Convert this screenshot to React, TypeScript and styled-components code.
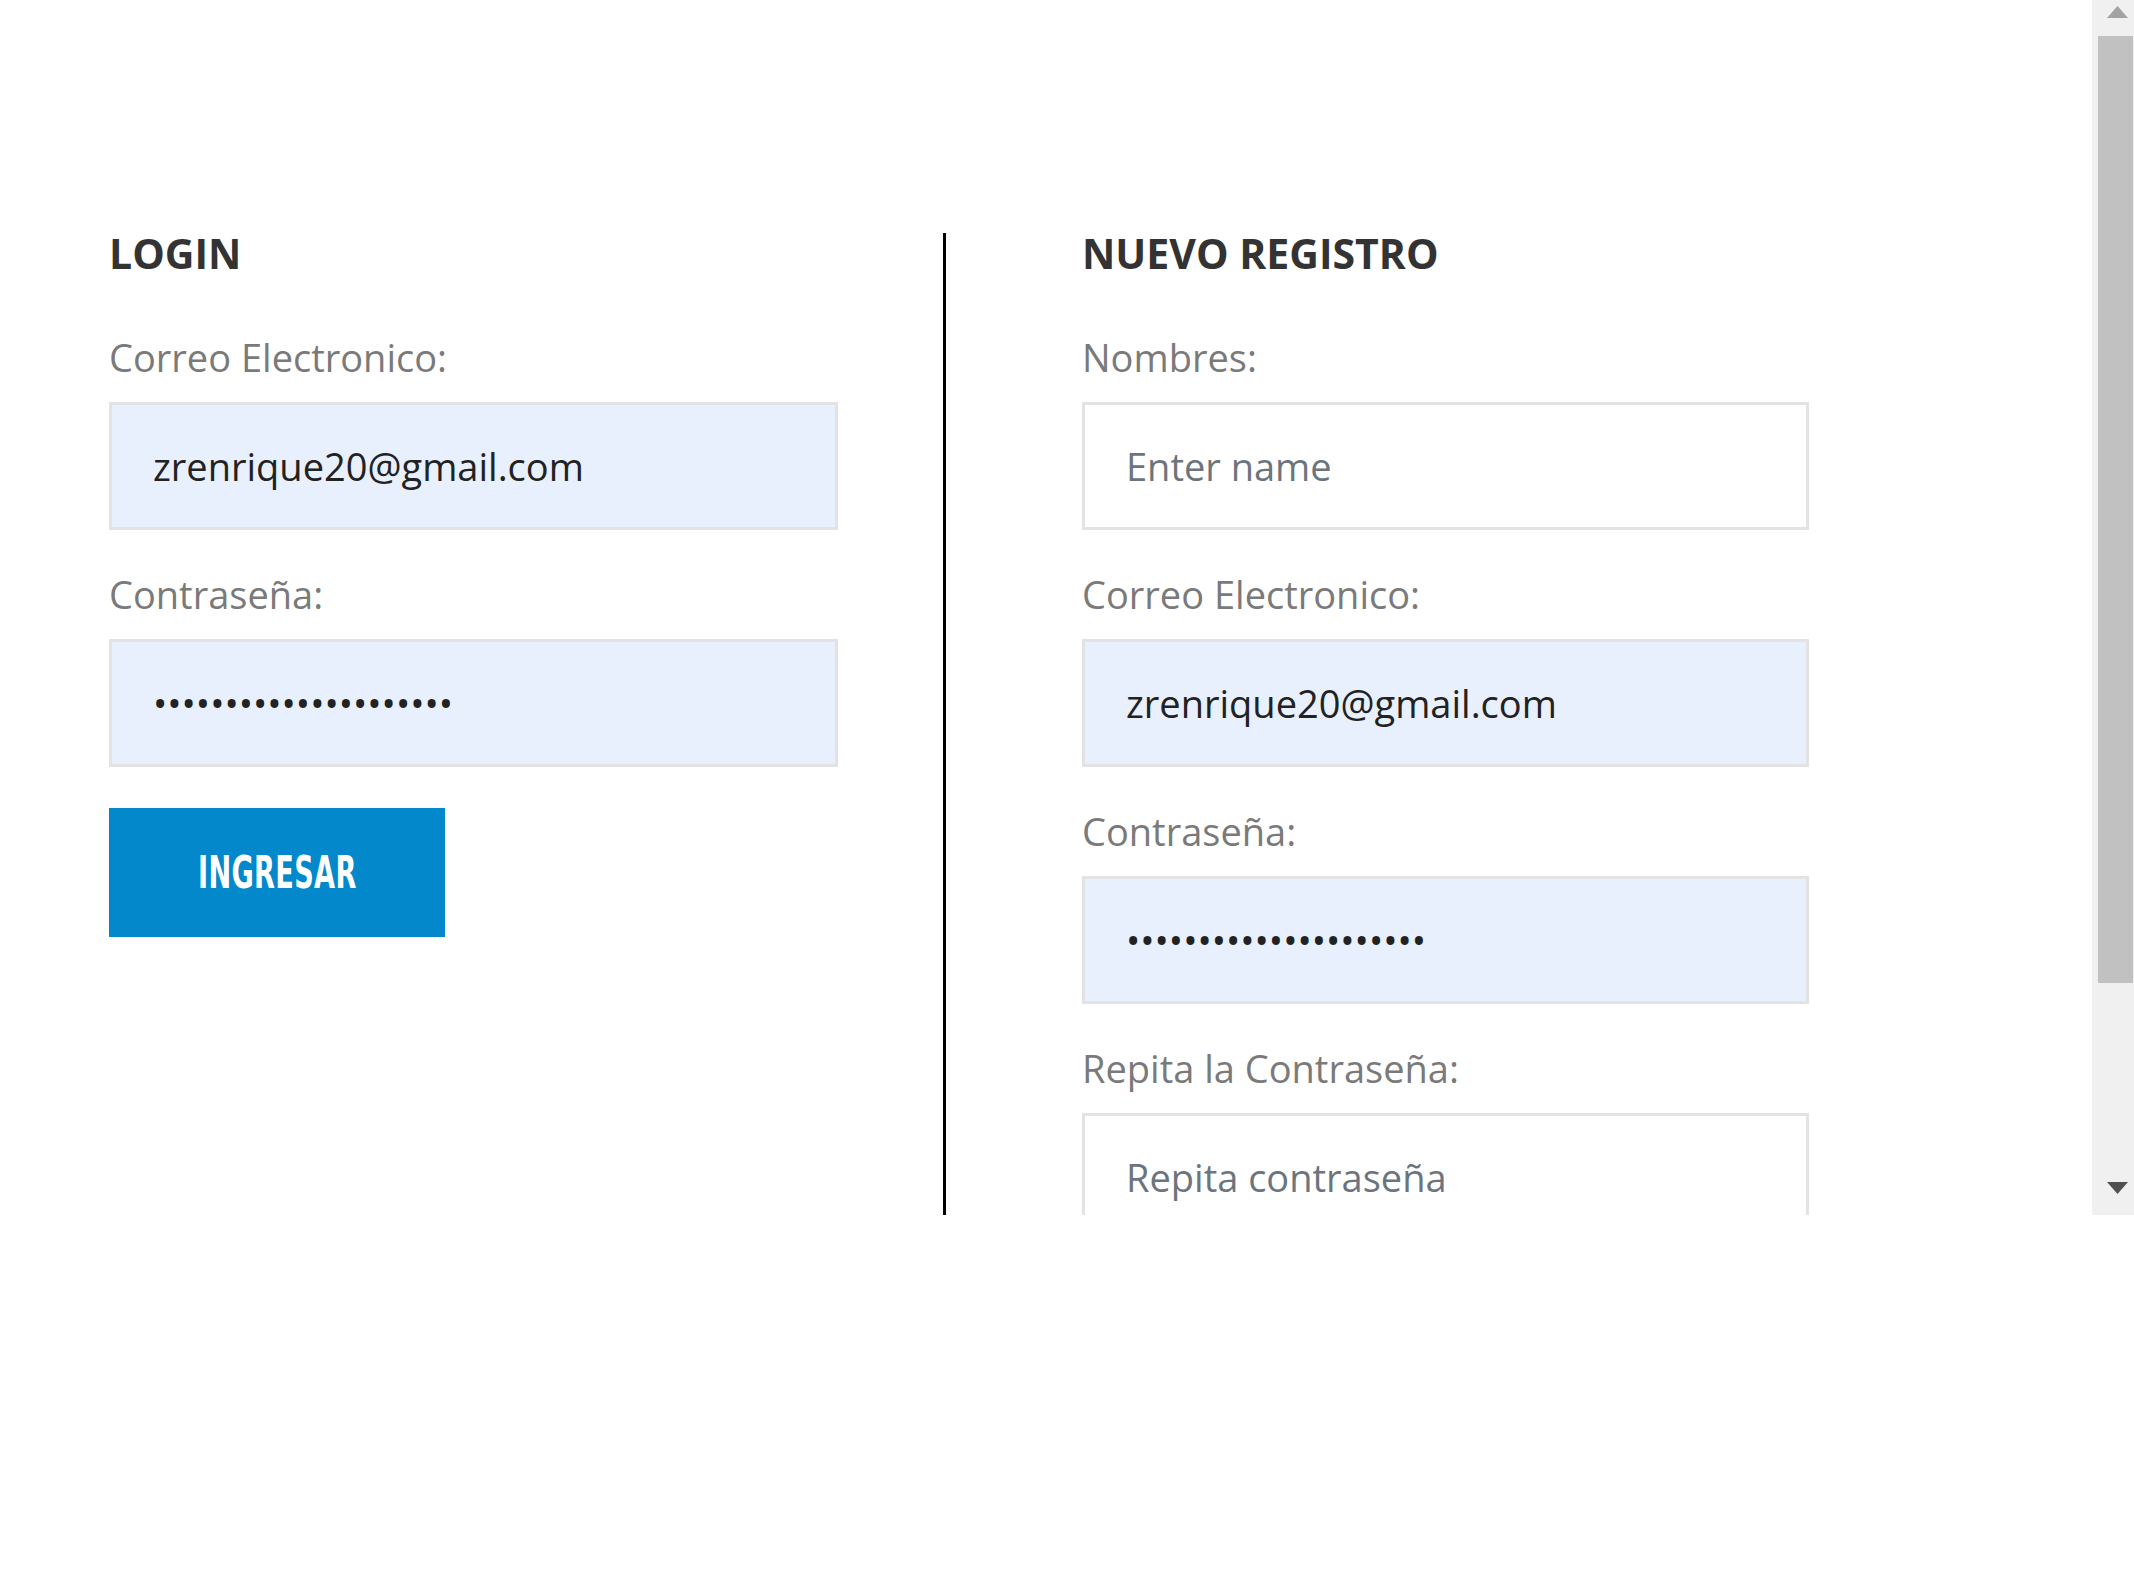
import React from "react";
import styled, { createGlobalStyle } from "styled-components";

const GlobalStyle = createGlobalStyle`
  html, body {
    margin: 0;
    padding: 0;
    background: #ffffff;
    font-family: "Open Sans", "Liberation Sans", sans-serif;
  }
  * { box-sizing: border-box; }
`;

const Frame = styled.div`
  display: flex;
  height: 1215px;
  width: 100%;
  overflow: hidden;
  background: #ffffff;
`;

const Viewport = styled.div`
  flex: 1;
  min-width: 0;
  overflow: hidden;
`;

const ScrollBar = styled.div`
  width: 42px;
  flex-shrink: 0;
  display: flex;
  flex-direction: column;
  background: #f0f0f0;
`;

const ArrowButton = styled.div<{ $down?: boolean }>`
  height: 36px;
  flex-shrink: 0;
  display: flex;
  align-items: flex-start;
  padding-left: 15px;
  padding-top: ${(p) => (p.$down ? "3px" : "6px")};
`;

const Track = styled.div`
  flex: 1;
  display: flex;
  flex-direction: column;
`;

const Thumb = styled.div`
  height: 947px;
  margin-left: 6px;
  margin-right: 1px;
  background: #c1c1c1;
`;

const Content = styled.div`
  display: flex;
  align-items: stretch;
  padding: 233px 0 56px 109px;
`;

const LoginColumn = styled.section`
  width: 729px;
  margin-right: 105px;
  flex-shrink: 0;
`;

const Divider = styled.div`
  width: 3px;
  background: #000000;
  flex-shrink: 0;
`;

const RegisterColumn = styled.section`
  width: 727px;
  margin-left: 136px;
  flex-shrink: 0;
`;

const Heading = styled.h2`
  margin: 0 0 60px;
  font-family: "Open Sans", "Liberation Sans", sans-serif;
  font-weight: 700;
  font-size: 41px;
  line-height: 41px;
  color: #333333;
  text-transform: uppercase;
`;

const Field = styled.div`
  display: flex;
  flex-direction: column;
  gap: 22px;
  margin-bottom: 41px;
`;

const Label = styled.label`
  font-family: "Open Sans", "Liberation Sans", sans-serif;
  font-weight: 400;
  font-size: 38px;
  line-height: 46px;
  color: #7a7a7a;
`;

const Input = styled.input<{ $filled?: boolean }>`
  display: block;
  width: 100%;
  height: 128px;
  margin: 0;
  padding: 0 41px;
  border: 3px solid #e3e3e3;
  border-radius: 0;
  background: ${(p) => (p.$filled ? "#e8f0fe" : "#ffffff")};
  font-family: "Open Sans", "Liberation Sans", sans-serif;
  font-size: 38px;
  color: #222222;
  outline: none;

  &::placeholder {
    color: #6c757d;
    opacity: 1;
  }
`;

const Button = styled.button`
  display: flex;
  align-items: center;
  justify-content: center;
  width: 336px;
  height: 129px;
  margin: 0;
  padding: 0;
  border: none;
  border-radius: 0;
  background: #0288cb;
  cursor: pointer;
`;

const ButtonText = styled.span`
  display: inline-block;
  font-family: "Liberation Sans Narrow", "DejaVu Sans", sans-serif;
  font-stretch: condensed;
  font-weight: 700;
  font-size: 45px;
  line-height: 1;
  color: #ffffff;
  letter-spacing: 0.5px;
  transform: scaleX(0.67);
`;

const EMAIL = "zrenrique20@gmail.com";
const PASS = "123456789012345678901";

export default function App() {
  return (
    <>
      <GlobalStyle />
      <Frame>
        <Viewport>
          <Content>
            <LoginColumn>
              <Heading>Login</Heading>
              <Field>
                <Label htmlFor="login-email">Correo Electronico:</Label>
                <Input id="login-email" type="email" $filled defaultValue={EMAIL} />
              </Field>
              <Field>
                <Label htmlFor="login-pass">Contraseña:</Label>
                <Input id="login-pass" type="password" $filled defaultValue={PASS} />
              </Field>
              <Button type="button">
                <ButtonText>INGRESAR</ButtonText>
              </Button>
            </LoginColumn>
            <Divider />
            <RegisterColumn>
              <Heading>Nuevo Registro</Heading>
              <Field>
                <Label htmlFor="reg-name">Nombres:</Label>
                <Input id="reg-name" type="text" placeholder="Enter name" />
              </Field>
              <Field>
                <Label htmlFor="reg-email">Correo Electronico:</Label>
                <Input id="reg-email" type="email" $filled defaultValue={EMAIL} />
              </Field>
              <Field>
                <Label htmlFor="reg-pass">Contraseña:</Label>
                <Input id="reg-pass" type="password" $filled defaultValue={PASS} />
              </Field>
              <Field>
                <Label htmlFor="reg-pass2">Repita la Contraseña:</Label>
                <Input id="reg-pass2" type="password" placeholder="Repita contraseña" />
              </Field>
              <Button type="button">
                <ButtonText>REGISTRAR</ButtonText>
              </Button>
            </RegisterColumn>
          </Content>
        </Viewport>
        <ScrollBar aria-hidden="true">
          <ArrowButton>
            <svg width="21" height="12" viewBox="0 0 21 12">
              <polygon points="10.5,0 21,12 0,12" fill="#a3a3a3" />
            </svg>
          </ArrowButton>
          <Track>
            <Thumb />
          </Track>
          <ArrowButton $down>
            <svg width="21" height="12" viewBox="0 0 21 12">
              <polygon points="0,0 21,0 10.5,12" fill="#505050" />
            </svg>
          </ArrowButton>
        </ScrollBar>
      </Frame>
    </>
  );
}
